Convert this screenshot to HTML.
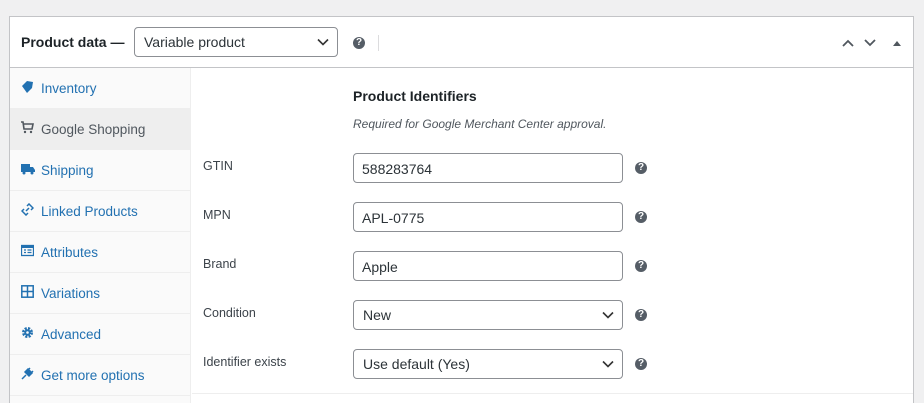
<!DOCTYPE html>
<html><head><style>
*{box-sizing:border-box;margin:0;padding:0}
html,body{width:924px;height:403px;overflow:hidden}
body{background:#f0f0f1;font-family:"Liberation Sans",Arial,sans-serif;position:relative;color:#1d2327}
.panel{position:absolute;left:9px;top:16px;width:905px;height:387px;background:#fff;border:1px solid #c3c4c7;border-bottom:none;overflow:hidden}
.hdr{position:absolute;left:0;top:0;width:903px;height:51px;border-bottom:1px solid #c3c4c7}
.title{position:absolute;left:11px;top:17px;font-size:14px;font-weight:bold}
.sel{position:absolute;border:1px solid #8c8f94;border-radius:4px;background:#fff;font-size:14px;padding-left:9px;color:#2c3338}
.sel svg{position:absolute;right:8px;top:50%;margin-top:-4px}
.help{position:absolute;width:12px;height:12px;border-radius:50%;background:#555d66;color:#fff;font-size:10px;font-weight:bold;text-align:center;line-height:12px}
.side{position:absolute;left:0;top:51px;width:181px;height:336px;background:#fafafa;border-right:1px solid #eee}
.tab{height:41px;border-bottom:1px solid #eee;position:relative;font-size:13.5px;color:#2271b1;padding:13px 0 0 31px}
.tab.act{background:#eee;color:#50575e}
.tab .ic{position:absolute;left:11px;top:12px}
.lbl{position:absolute;left:193px;font-size:12.5px;color:#3c434a}
.inp{position:absolute;left:343px;width:270px;height:30px;border:1px solid #8c8f94;border-radius:4px;font-size:14px;padding:7px 0 0 8px;color:#2c3338}
</style></head><body>
<div class="panel">
 <div class="hdr">
  <div class="title">Product data —</div>
  <div class="sel" style="left:124px;top:10px;width:204px;height:30px;line-height:28px">Variable product<svg width="12" height="8" viewBox="0 0 12 8"><path d="M1 1.5l5 5 5-5" fill="none" stroke="#333" stroke-width="1.6"/></svg></div>
  <div class="help" style="left:343px;top:20px">?</div>
  <div style="position:absolute;left:368px;top:18px;width:1px;height:16px;background:#dcdcde"></div>
  <svg style="position:absolute;left:831px;top:20px" width="60" height="12" viewBox="0 0 60 12"><path d="M2 9l5-5 5 5M24 3l5 5 5-5" fill="none" stroke="#50575e" stroke-width="1.8"/><path d="M52 9l4-5 4 5z" fill="#50575e"/></svg>
 </div>
 <div class="side">
  <div class="tab"><svg class="ic" width="13" height="13" viewBox="0 0 13 13"><path d="M1 6l5-5 6 1 -1 6-5 5z" fill="#2271b1"/></svg>Inventory</div>
  <div class="tab act"><svg class="ic" width="13" height="13" viewBox="0 0 13 13"><path d="M0 1h2l1 7h8l1-5H3" fill="none" stroke="#50575e" stroke-width="1.6"/><circle cx="4" cy="11" r="1.2" fill="#50575e"/><circle cx="10" cy="11" r="1.2" fill="#50575e"/></svg>Google Shopping</div>
  <div class="tab"><svg class="ic" width="14" height="13" viewBox="0 0 14 13"><path d="M0 2h9v8H0zM9 5h3l2 3v2H9z" fill="#2271b1"/><circle cx="3" cy="11" r="1.5" fill="#2271b1"/><circle cx="11" cy="11" r="1.5" fill="#2271b1"/></svg>Shipping</div>
  <div class="tab"><svg class="ic" width="13" height="13" viewBox="0 0 13 13"><path d="M5 8l3-3M6 3l2-2 4 4-2 2M7 10l-2 2-4-4 2-2" fill="none" stroke="#2271b1" stroke-width="1.5"/></svg>Linked Products</div>
  <div class="tab"><svg class="ic" width="13" height="13" viewBox="0 0 13 13"><rect x="0.5" y="1.5" width="12" height="10" fill="none" stroke="#2271b1" stroke-width="1.3"/><rect x="0" y="1" width="13" height="3" fill="#2271b1"/><path d="M3 6h2M3 8.5h2M6.5 6h4M6.5 8.5h4" stroke="#2271b1" stroke-width="1.2"/></svg>Attributes</div>
  <div class="tab"><svg class="ic" width="13" height="13" viewBox="0 0 13 13"><rect x="0.8" y="0.8" width="11.4" height="11.4" fill="none" stroke="#2271b1" stroke-width="1.5"/><path d="M6.5 1v11M1 6.5h11" stroke="#2271b1" stroke-width="1.5"/></svg>Variations</div>
  <div class="tab"><svg class="ic" width="13" height="13" viewBox="0 0 13 13"><circle cx="6.5" cy="6.5" r="4" fill="none" stroke="#2271b1" stroke-width="3" stroke-dasharray="2 1.2"/><circle cx="6.5" cy="6.5" r="3.2" fill="#2271b1"/><circle cx="6.5" cy="6.5" r="1.3" fill="#fafafa"/></svg>Advanced</div>
  <div class="tab"><svg class="ic" width="13" height="13" viewBox="0 0 13 13"><path d="M1 12l4-4M4 5l4 4 3-3-4-4z M9 1l-2 2M12 4l-2 2" fill="#2271b1" stroke="#2271b1" stroke-width="1.5"/></svg>Get more options</div>
 </div>
 <div style="position:absolute;left:343px;top:71px;font-size:14px;font-weight:bold">Product Identifiers</div>
 <div style="position:absolute;left:343px;top:100px;font-size:12px;font-style:italic;color:#50575e">Required for Google Merchant Center approval.</div>
 <div class="lbl" style="top:142px">GTIN</div><div class="inp" style="top:136px">588283764</div><div class="help" style="left:625px;top:145px">?</div>
 <div class="lbl" style="top:191px">MPN</div><div class="inp" style="top:185px">APL-0775</div><div class="help" style="left:625px;top:194px">?</div>
 <div class="lbl" style="top:240px">Brand</div><div class="inp" style="top:234px">Apple</div><div class="help" style="left:625px;top:243px">?</div>
 <div class="lbl" style="top:289px">Condition</div><div class="sel" style="left:343px;top:283px;width:270px;height:30px;line-height:28px">New<svg width="12" height="8" viewBox="0 0 12 8"><path d="M1 1.5l5 5 5-5" fill="none" stroke="#333" stroke-width="1.6"/></svg></div><div class="help" style="left:625px;top:292px">?</div>
 <div class="lbl" style="top:338px">Identifier exists</div><div class="sel" style="left:343px;top:332px;width:270px;height:30px;line-height:28px">Use default (Yes)<svg width="12" height="8" viewBox="0 0 12 8"><path d="M1 1.5l5 5 5-5" fill="none" stroke="#333" stroke-width="1.6"/></svg></div><div class="help" style="left:625px;top:341px">?</div>
 <div style="position:absolute;left:182px;top:376px;width:721px;height:1px;background:#eee"></div>
</div>
</body></html>
